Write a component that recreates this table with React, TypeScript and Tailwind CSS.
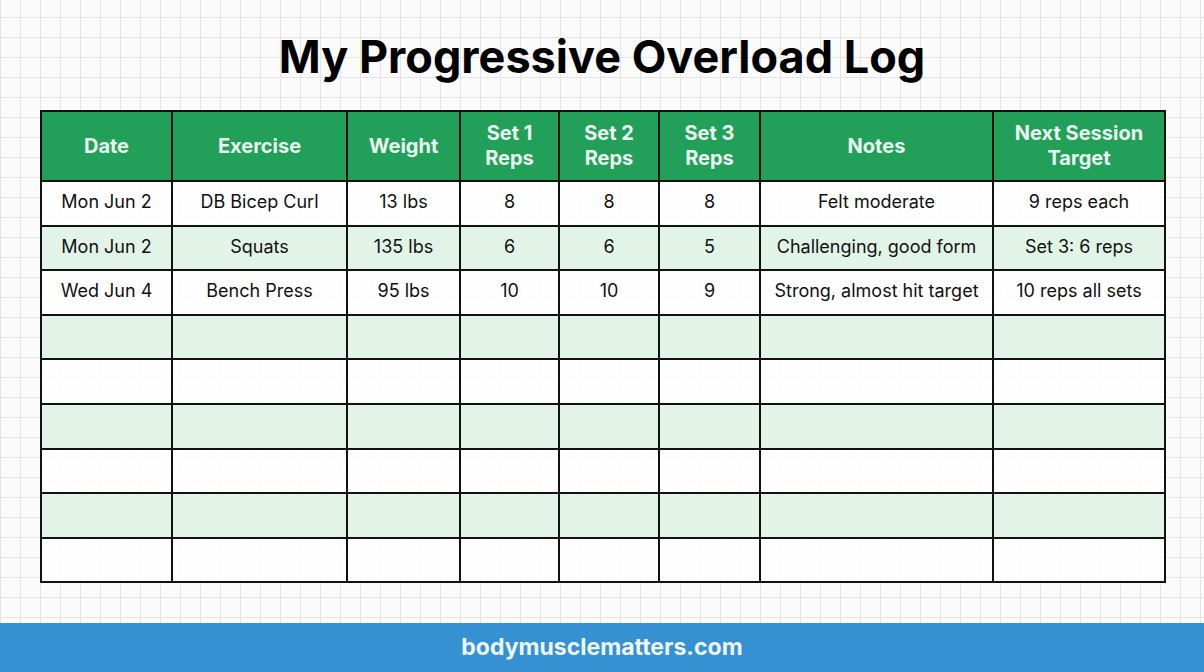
const columns = [
  { label: ['Date'], width: 'w-[131px]' },
  { label: ['Exercise'], width: 'w-[175px]' },
  { label: ['Weight'], width: 'w-[113px]' },
  { label: ['Set 1', 'Reps'], width: 'w-[99px]' },
  { label: ['Set 2', 'Reps'], width: 'w-[100px]' },
  { label: ['Set 3', 'Reps'], width: 'w-[101px]' },
  { label: ['Notes'], width: 'w-[233px]' },
  { label: ['Next Session', 'Target'], width: 'w-[172px]' },
];

const entries: string[][] = [
  ['Mon Jun 2', 'DB Bicep Curl', '13 lbs', '8', '8', '8', 'Felt moderate', '9 reps each'],
  ['Mon Jun 2', 'Squats', '135 lbs', '6', '6', '5', 'Challenging, good form', 'Set 3: 6 reps'],
  ['Wed Jun 4', 'Bench Press', '95 lbs', '10', '10', '9', 'Strong, almost hit target', '10 reps all sets'],
];

const rows = [...entries, ...Array.from({ length: 6 }, () => Array(8).fill(''))];

export default function App() {
  return (
    <div
      className="flex h-[672px] w-[1204px] flex-col overflow-hidden bg-[#fbfbfb] bg-[linear-gradient(to_right,#e4e4e4_1px,transparent_1px),linear-gradient(to_bottom,#e4e4e4_1px,transparent_1px)] bg-[size:20px_20px] bg-[position:0px_-3px]"
      style={{ fontFamily: 'Inter, "Liberation Sans", sans-serif' }}
    >
      <div className="flex h-[110px] items-center justify-center pt-[4px]">
        <h1 className="text-[45px] font-bold tracking-[0px] text-black">My Progressive Overload Log</h1>
      </div>

      <div className="px-[40px]">
        <table className="w-full table-fixed border-collapse border-2 border-[#111]">
          <colgroup>
            {columns.map((c, i) => (
              <col key={i} className={c.width} />
            ))}
          </colgroup>
          <thead>
            <tr className="h-[70px] bg-[#22a05a]">
              {columns.map((c, i) => (
                <th key={i} className="border-2 border-[#111] px-1 text-center text-[20px] font-bold leading-[25px] text-[#eaf8ef]">
                  {c.label.map((l) => (
                    <div key={l}>{l}</div>
                  ))}
                </th>
              ))}
            </tr>
          </thead>
          <tbody>
            {rows.map((row, r) => (
              <tr key={r} className={r % 2 === 1 ? 'h-[44.6px] bg-[#e2f4e8]' : 'h-[44.6px] bg-white/85'}>
                {row.map((cell, i) => (
                  <td key={i} className="border-2 border-[#111] px-1 pb-[3px] text-center text-[18px] text-[#111]">
                    {cell}
                  </td>
                ))}
              </tr>
            ))}
          </tbody>
        </table>
      </div>

      <div className="flex-1" />

      <div className="flex h-[49px] items-center justify-center bg-[#3591d1]">
        <span className="text-[23px] font-bold text-[#eef7fd]">bodymusclematters.com</span>
      </div>
    </div>
  );
}
